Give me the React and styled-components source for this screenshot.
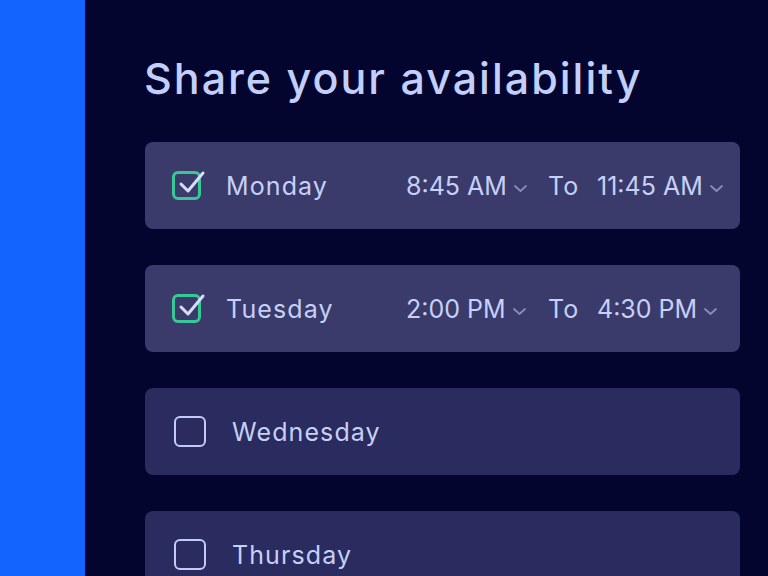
import React from "react";
import styled, { createGlobalStyle } from "styled-components";

const Global = createGlobalStyle`
  html, body { margin: 0; padding: 0; background: #03052f; }
  body { font-family: Inter, "Noto Sans", sans-serif; }
  * { box-sizing: border-box; }
`;

const Page = styled.div`
  display: flex;
  width: 768px;
  height: 576px;
  overflow: hidden;
`;

const Sidebar = styled.div`
  width: 85px;
  flex: none;
  background: #1263ff;
`;

const Main = styled.main`
  flex: 1;
  background: #03052f;
  padding: 49px 28px 0 60px;
  display: flex;
  flex-direction: column;
`;

const Title = styled.h1`
  margin: 0 0 35px -1px;
  font-size: 43px;
  line-height: 58px;
  font-weight: 500;
  color: #c3cffb;
  letter-spacing: 2px;
`;

const List = styled.div`
  display: flex;
  flex-direction: column;
  gap: 36px;
`;

const Row = styled.div`
  height: 87px;
  flex: none;
  border-radius: 8px;
  background: ${(p) => (p.$checked ? "#3a3b6b" : "#2a2b5e")};
  display: grid;
  grid-template-columns: ${(p) => (p.$checked ? "54px" : "58px")} 180px 142px 49px auto;
  align-items: center;
  padding-left: ${(p) => (p.$checked ? "27px" : "29px")};
  color: #c6d0f8;
  font-size: 25px;
  letter-spacing: 1.1px;
`;

const Box = styled.span`
  width: ${(p) => (p.$checked ? "29px" : "32px")};
  height: ${(p) => (p.$checked ? "29px" : "31px")};
  border-radius: 6px;
  border: ${(p) => (p.$checked ? "3px solid #37c995" : "2.5px solid #c3cbf5")};
  position: relative;
  display: block;
`;

const Tick = styled.svg`
  position: absolute;
  left: 3px;
  top: -3px;
  width: 30px;
  height: 26px;
  overflow: visible;
`;

const Name = styled.span`
  white-space: nowrap;
`;

const Time = styled.span`
  display: flex;
  align-items: center;
  gap: 6px;
  white-space: nowrap;
  letter-spacing: 0;
`;

const Chevron = styled.svg`
  width: 15px;
  height: 10px;
  margin-top: 4px;
  flex: none;
`;

const days = [
  { name: "Monday", checked: true, from: "8:45 AM", to: "11:45 AM" },
  { name: "Tuesday", checked: true, from: "2:00 PM", to: "4:30 PM" },
  { name: "Wednesday", checked: false },
  { name: "Thursday", checked: false },
];

const Down = () => (
  <Chevron viewBox="0 0 15 10">
    <path d="M2 3 L7.5 8 L13 3" fill="none" stroke="#8a8dbd" strokeWidth="1.7" strokeLinecap="round" strokeLinejoin="round" />
  </Chevron>
);

export default function App() {
  return (
    <Page>
      <Global />
      <Sidebar />
      <Main>
        <Title>Share your availability</Title>
        <List>
          {days.map((d) => (
            <Row key={d.name} $checked={d.checked}>
              <Box $checked={d.checked}>
                {d.checked && (
                  <Tick viewBox="0 0 30 26">
                    <path d="M3 13 L10 20 L25 2" fill="none" stroke="#d6dcfb" strokeWidth="3" strokeLinecap="round" strokeLinejoin="round" />
                  </Tick>
                )}
              </Box>
              <Name>{d.name}</Name>
              {d.checked && (
                <>
                  <Time>{d.from}<Down /></Time>
                  <Name>To</Name>
                  <Time>{d.to}<Down /></Time>
                </>
              )}
            </Row>
          ))}
        </List>
      </Main>
    </Page>
  );
}
